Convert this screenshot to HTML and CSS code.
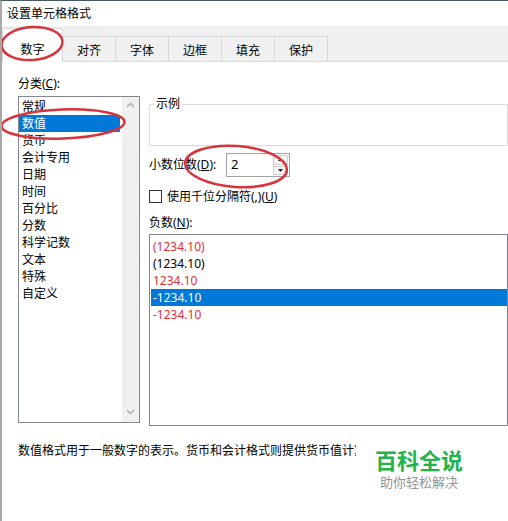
FILE: index.html
```html
<!DOCTYPE html>
<html lang="zh">
<head>
<meta charset="utf-8">
<title>设置单元格格式</title>
<link rel="stylesheet" href="styles.css">
</head>
<body>
<div class="window">
  <div class="titlebar">设置单元格格式</div>
  <div class="tabstrip">
    <div class="tab selected">数字</div>
    <div class="tab">对齐</div>
    <div class="tab">字体</div>
    <div class="tab">边框</div>
    <div class="tab">填充</div>
    <div class="tab">保护</div>
  </div>
  <div class="content">
    <div class="columns">
      <div class="leftcol">
        <div class="label">分类(<u>C</u>):</div>
        <div class="catlist">
          <div class="items">
            <div class="item">常规</div>
            <div class="item sel">数值</div>
            <div class="item">货币</div>
            <div class="item">会计专用</div>
            <div class="item">日期</div>
            <div class="item">时间</div>
            <div class="item">百分比</div>
            <div class="item">分数</div>
            <div class="item">科学记数</div>
            <div class="item">文本</div>
            <div class="item">特殊</div>
            <div class="item">自定义</div>
          </div>
          <div class="scrollbar">
            <svg class="chev" width="9" height="6" viewBox="0 0 9 6"><path d="M1 5 L4.5 1.5 L8 5" fill="none" stroke="#a6a6a6" stroke-width="1.3"/></svg>
            <svg class="chev" width="9" height="6" viewBox="0 0 9 6"><path d="M1 1 L4.5 4.5 L8 1" fill="none" stroke="#a6a6a6" stroke-width="1.3"/></svg>
          </div>
        </div>
      </div>
      <div class="rightcol">
        <div class="sample"><span class="legend">示例</span></div>
        <div class="decrow">
          <div class="declabel">小数位数(<u>D</u>):</div>
          <div class="spinbox">
            <div class="spinval">2</div>
            <div class="spinbtns">
              <div class="spinbtn"><svg width="5" height="3" viewBox="0 0 5 3"><path d="M0 3 L2.5 0 L5 3 Z" fill="#222"/></svg></div>
              <div class="spinbtn"><svg width="5" height="3" viewBox="0 0 5 3"><path d="M0 0 L2.5 3 L5 0 Z" fill="#222"/></svg></div>
            </div>
          </div>
        </div>
        <div class="checkrow">
          <span class="checkbox"></span>
          <span class="checklabel">使用千位分隔符(,)(<u>U</u>)</span>
        </div>
        <div class="label neglabel">负数(<u>N</u>):</div>
        <div class="neglist">
          <div class="nitem red">(1234.10)</div>
          <div class="nitem">(1234.10)</div>
          <div class="nitem red">1234.10</div>
          <div class="nitem sel">-1234.10</div>
          <div class="nitem red">-1234.10</div>
        </div>
      </div>
    </div>
    <div class="desc">数值格式用于一般数字的表示。货币和会计格式则提供货币值计算的专用格式。</div>
  </div>
  <div class="watermark">
    <div class="wm-title">百科全说</div>
    <div class="wm-sub">助你轻松解决</div>
  </div>
  <svg class="marks" width="508" height="521" viewBox="0 0 508 521">
    <ellipse cx="32" cy="43.5" rx="30.5" ry="16.5" fill="none" stroke="#d8343c" stroke-width="2.5" transform="rotate(-4 32 43.5)"/>
    <ellipse cx="63" cy="124" rx="61.5" ry="14.5" fill="none" stroke="#d8343c" stroke-width="2.5" transform="rotate(-2 63 124)"/>
    <ellipse cx="236" cy="166.5" rx="51" ry="20.5" fill="none" stroke="#d8343c" stroke-width="2.5" transform="rotate(4 236 166.5)"/>
  </svg>
</div>
</body>
</html>
```

FILE: styles.css
```css
html, body {
  margin: 0;
  padding: 0;
  background: #ffffff;
}
body {
  width: 508px;
  height: 521px;
  overflow: hidden;
  font-family: "Noto Sans", "Noto Sans CJK SC", sans-serif;
  font-size: 12px;
  color: #000;
}
.window {
  position: relative;
  width: 508px;
  height: 521px;
  box-sizing: border-box;
  border-top: 1px solid #465867;
  border-left: 2px solid #a9a9a9;
  overflow: hidden;
}
.titlebar {
  height: 25px;
  line-height: 25px;
  padding-left: 5px;
  font-size: 12px;
}
.tabstrip {
  height: 35px;
  background: #f0f0f0;
  border-bottom: 1px solid #d9d9d9;
  display: flex;
  align-items: flex-end;
}
.tab {
  box-sizing: border-box;
  width: 54px;
  height: 25px;
  padding-top: 2px;
  line-height: 24px;
  text-align: center;
  border: 1px solid #d9d9d9;
  border-bottom: none;
  margin-left: -1px;
  background: #f0f0f0;
}
.tab.selected {
  width: 61px;
  height: 34px;
  padding-top: 9px;
  margin-left: 0;
  margin-bottom: -1px;
  background: #ffffff;
  position: relative;
  z-index: 1;
}
.content {
  padding-left: 16px;
}
.columns {
  display: flex;
  align-items: flex-start;
  gap: 9px;
}
.leftcol {
  width: 122px;
  padding-top: 14px;
}
.label {
  height: 16px;
  line-height: 16px;
}
.catlist {
  margin-top: 4px;
  box-sizing: border-box;
  width: 122px;
  height: 327px;
  border: 1px solid #828790;
  display: flex;
}
.items {
  flex: 1;
  padding-top: 1px;
}
.item {
  height: 17px;
  line-height: 17px;
  padding-left: 3px;
}
.item.sel {
  background: #0078d7;
  color: #fff;
  margin-right: 2px;
}
.scrollbar {
  width: 17px;
  background: #f0f0f0;
  display: flex;
  flex-direction: column;
  justify-content: space-between;
  align-items: center;
  padding: 5px 0 7px;
}
.chev {
  display: block;
}
.rightcol {
  width: 400px;
}
.sample {
  position: relative;
  margin-top: 42px;
  box-sizing: border-box;
  height: 42px;
  border: 1px solid #dcdcdc;
}
.legend {
  position: absolute;
  top: -9px;
  left: 4px;
  padding: 0 2px;
  background: #fff;
  line-height: 16px;
}
.decrow {
  margin-top: 7px;
  display: flex;
  align-items: center;
  height: 24px;
}
.declabel {
  width: 77px;
  line-height: 16px;
}
.spinbox {
  box-sizing: border-box;
  width: 64px;
  height: 24px;
  border: 1px solid #a3a3a3;
  display: flex;
}
.spinval {
  flex: 1;
  padding-left: 4px;
  line-height: 21px;
  font-size: 13px;
}
.spinbtns {
  width: 15px;
  display: flex;
  flex-direction: column;
  gap: 1px;
  padding: 1px 1px 1px 0;
}
.spinbtn {
  flex: 1;
  box-sizing: border-box;
  border: 1px solid #cfcfcf;
  background: #f4f4f4;
  display: flex;
  align-items: center;
  justify-content: center;
}
.spinbtn svg {
  display: block;
}
.checkrow {
  margin-top: 13px;
  display: flex;
  align-items: center;
  height: 13px;
}
.checkbox {
  box-sizing: border-box;
  width: 13px;
  height: 13px;
  border: 1px solid #333;
  background: #fff;
}
.checklabel {
  margin-left: 5px;
  line-height: 16px;
}
.neglabel {
  margin-top: 12px;
}
.neglist {
  margin-top: 3px;
  box-sizing: border-box;
  height: 192px;
  border: 1px solid #828790;
  padding-top: 3px;
}
.nitem {
  height: 17px;
  line-height: 17px;
  padding-left: 3px;
}
.nitem.red {
  color: #e03232;
}
.nitem.sel {
  background: #0078d7;
  color: #fff;
  margin-left: 1px;
  padding-left: 2px;
}
.desc {
  margin-top: 17px;
  width: 338px;
  overflow: hidden;
  line-height: 16px;
  white-space: nowrap;
}
.watermark {
  position: absolute;
  left: 354px;
  top: 440px;
  width: 126px;
  height: 56px;
  background: #fff;
  text-align: center;
}
.wm-title {
  margin-top: 7px;
  font-family: "Noto Sans CJK SC", sans-serif;
  font-weight: 700;
  font-size: 22px;
  line-height: 22px;
  color: #22b34b;
}
.wm-sub {
  margin-top: 5px;
  font-family: "Noto Sans CJK SC", sans-serif;
  font-size: 13px;
  line-height: 14px;
  color: #959595;
}
.marks {
  position: absolute;
  left: -2px;
  top: -1px;
  z-index: 5;
  pointer-events: none;
}
```
